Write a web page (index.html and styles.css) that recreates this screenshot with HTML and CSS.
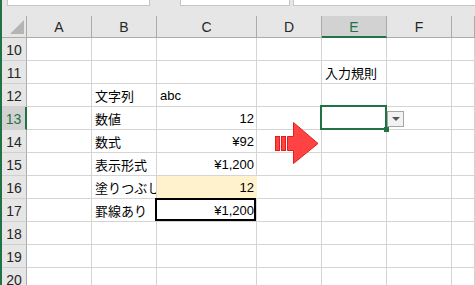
FILE: index.html
```html
<!DOCTYPE html>
<html lang="ja">
<head>
    <meta charset="UTF-8">
    <meta name="viewport" content="width=device-width, initial-scale=1.0">
    <title>入力規則</title>
    <link rel="stylesheet" href="styles.css">
</head>
<body>
<div class="sheet">
    <div class="formula-bar">
        <div class="box name-box"></div>
        <div class="box func-box"></div>
        <div class="box input-box"></div>
    </div>

    <div class="grid">
        <!-- column headers -->
        <div class="corner">
            <svg width="14" height="14" viewBox="0 0 14 14"><polygon points="0,14 14,14 14,0" fill="#b4b4b4"/></svg>
        </div>
        <div class="col-head">A</div>
        <div class="col-head">B</div>
        <div class="col-head">C</div>
        <div class="col-head">D</div>
        <div class="col-head active">E</div>
        <div class="col-head">F</div>
        <div class="col-head"></div>

        <!-- row 10 -->
        <div class="row-head">10</div>
        <div class="cell"></div><div class="cell"></div><div class="cell"></div><div class="cell"></div><div class="cell"></div><div class="cell"></div><div class="cell"></div>

        <!-- row 11 -->
        <div class="row-head">11</div>
        <div class="cell"></div><div class="cell"></div><div class="cell"></div><div class="cell"></div>
        <div class="cell">入力規則</div>
        <div class="cell"></div><div class="cell"></div>

        <!-- row 12 -->
        <div class="row-head">12</div>
        <div class="cell"></div>
        <div class="cell">文字列</div>
        <div class="cell">abc</div>
        <div class="cell"></div><div class="cell"></div><div class="cell"></div><div class="cell"></div>

        <!-- row 13 -->
        <div class="row-head active">13</div>
        <div class="cell"></div>
        <div class="cell">数値</div>
        <div class="cell num">12</div>
        <div class="cell"></div>
        <div class="cell selected">
            <div class="select-box"></div>
            <div class="fill-handle"></div>
            <div class="dropdown"><span class="caret"></span></div>
        </div>
        <div class="cell"></div><div class="cell"></div>

        <!-- row 14 -->
        <div class="row-head">14</div>
        <div class="cell"></div>
        <div class="cell">数式</div>
        <div class="cell num">¥92</div>
        <div class="cell arrow-cell">
            <svg class="arrow" width="46" height="42" viewBox="0 0 46 42">
                <g fill="#ff4343" stroke="#e21d1d" stroke-width="1">
                    <rect x="1.5" y="14.5" width="4" height="14"/>
                    <rect x="7.5" y="14.5" width="4" height="14"/>
                    <polygon points="13.5,14.5 19.5,14.5 19.5,0.5 44,21.5 19.5,41.5 19.5,28.5 13.5,28.5"/>
                </g>
            </svg>
        </div>
        <div class="cell"></div><div class="cell"></div><div class="cell"></div>

        <!-- row 15 -->
        <div class="row-head">15</div>
        <div class="cell"></div>
        <div class="cell">表示形式</div>
        <div class="cell num">¥1,200</div>
        <div class="cell"></div><div class="cell"></div><div class="cell"></div><div class="cell"></div>

        <!-- row 16 -->
        <div class="row-head">16</div>
        <div class="cell"></div>
        <div class="cell">塗りつぶし</div>
        <div class="cell num filled">12</div>
        <div class="cell"></div><div class="cell"></div><div class="cell"></div><div class="cell"></div>

        <!-- row 17 -->
        <div class="row-head">17</div>
        <div class="cell"></div>
        <div class="cell">罫線あり</div>
        <div class="cell num bordered"><div class="thick-box"></div>¥1,200</div>
        <div class="cell"></div><div class="cell"></div><div class="cell"></div><div class="cell"></div>

        <!-- row 18 -->
        <div class="row-head">18</div>
        <div class="cell"></div><div class="cell"></div><div class="cell"></div><div class="cell"></div><div class="cell"></div><div class="cell"></div><div class="cell"></div>

        <!-- row 19 -->
        <div class="row-head">19</div>
        <div class="cell"></div><div class="cell"></div><div class="cell"></div><div class="cell"></div><div class="cell"></div><div class="cell"></div><div class="cell"></div>

        <!-- row 20 -->
        <div class="row-head">20</div>
        <div class="cell"></div><div class="cell"></div><div class="cell"></div><div class="cell"></div><div class="cell"></div><div class="cell"></div><div class="cell"></div>
    </div>
</div>
</body>
</html>
```

FILE: styles.css
```css
* {
    box-sizing: border-box;
}
body {
    margin: 0;
    background: #fff;
    font-family: "Liberation Sans", "Noto Sans CJK JP", sans-serif;
    overflow: hidden;
}
.sheet {
    height: 285px;
    border-left: 2px solid #217346;
    overflow: hidden;
}

/* formula bar strip */
.formula-bar {
    display: flex;
    align-items: flex-start;
    height: 16px;
    background: #e6e6e6;
}
.box {
    height: 6px;
    background: #fff;
    border: 1px solid #c6c6c6;
    border-top: none;
}
.name-box {
    width: 143px;
    margin-left: 5px;
}
.func-box {
    width: 110px;
    margin-left: 30px;
}
.input-box {
    flex: 1;
    margin-left: 3px;
    border-right: none;
}

/* grid */
.grid {
    display: grid;
    grid-template-columns: 25px 65px 65px 100px 65px 65px 65px 1fr;
    grid-template-rows: 22px repeat(11, 23px);
}
.corner,
.col-head,
.row-head {
    background: #e6e6e6;
    color: #262626;
    font-size: 14px;
    border-right: 1px solid #ababab;
    border-bottom: 1px solid #ababab;
}
.corner {
    display: flex;
    justify-content: flex-end;
    align-items: flex-end;
    padding: 0 2px 3px 0;
}
.col-head {
    display: flex;
    align-items: center;
    justify-content: center;
    padding-top: 1px;
}
.col-head.active {
    background: #d2d2d2;
    color: #217346;
    border-bottom: 2px solid #217346;
}
.row-head {
    display: flex;
    align-items: center;
    justify-content: center;
    border-bottom-color: #d0d0d0;
    padding-top: 1px;
}
.row-head.active {
    background: #d2d2d2;
    color: #217346;
    border-right: 2px solid #217346;
}
.cell {
    position: relative;
    display: flex;
    align-items: center;
    padding: 1px 2px 0 3px;
    font-size: 13px;
    color: #000;
    white-space: nowrap;
    overflow: hidden;
    border-right: 1px solid #d4d4d4;
    border-bottom: 1px solid #d4d4d4;
}
.cell.num {
    justify-content: flex-end;
    padding-left: 2px;
}
.cell.filled {
    background: #fff2cc;
    border-right-color: #fff2cc;
}
.cell.bordered,
.cell.selected,
.cell.arrow-cell {
    overflow: visible;
}
.thick-box {
    position: absolute;
    left: -2px;
    top: -1px;
    right: 0;
    bottom: 0;
    border: 2px solid #000;
}

/* active cell with list validation */
.select-box {
    position: absolute;
    left: -2px;
    top: -2px;
    right: -1px;
    bottom: -1px;
    border: 2px solid #217346;
    z-index: 2;
}
.fill-handle {
    position: absolute;
    left: 62px;
    top: 20px;
    width: 5px;
    height: 5px;
    background: #217346;
    z-index: 3;
}
.dropdown {
    position: absolute;
    left: 65px;
    top: 4px;
    width: 17px;
    height: 16px;
    background: #f2f2f2;
    border: 1px solid #a6a6a6;
    display: flex;
    align-items: center;
    justify-content: center;
    z-index: 3;
}
.caret {
    width: 0;
    height: 0;
    border-left: 4px solid transparent;
    border-right: 4px solid transparent;
    border-top: 4px solid #555;
}

/* red arrow */
.arrow {
    position: absolute;
    left: 17px;
    top: -8px;
    z-index: 2;
}
```
